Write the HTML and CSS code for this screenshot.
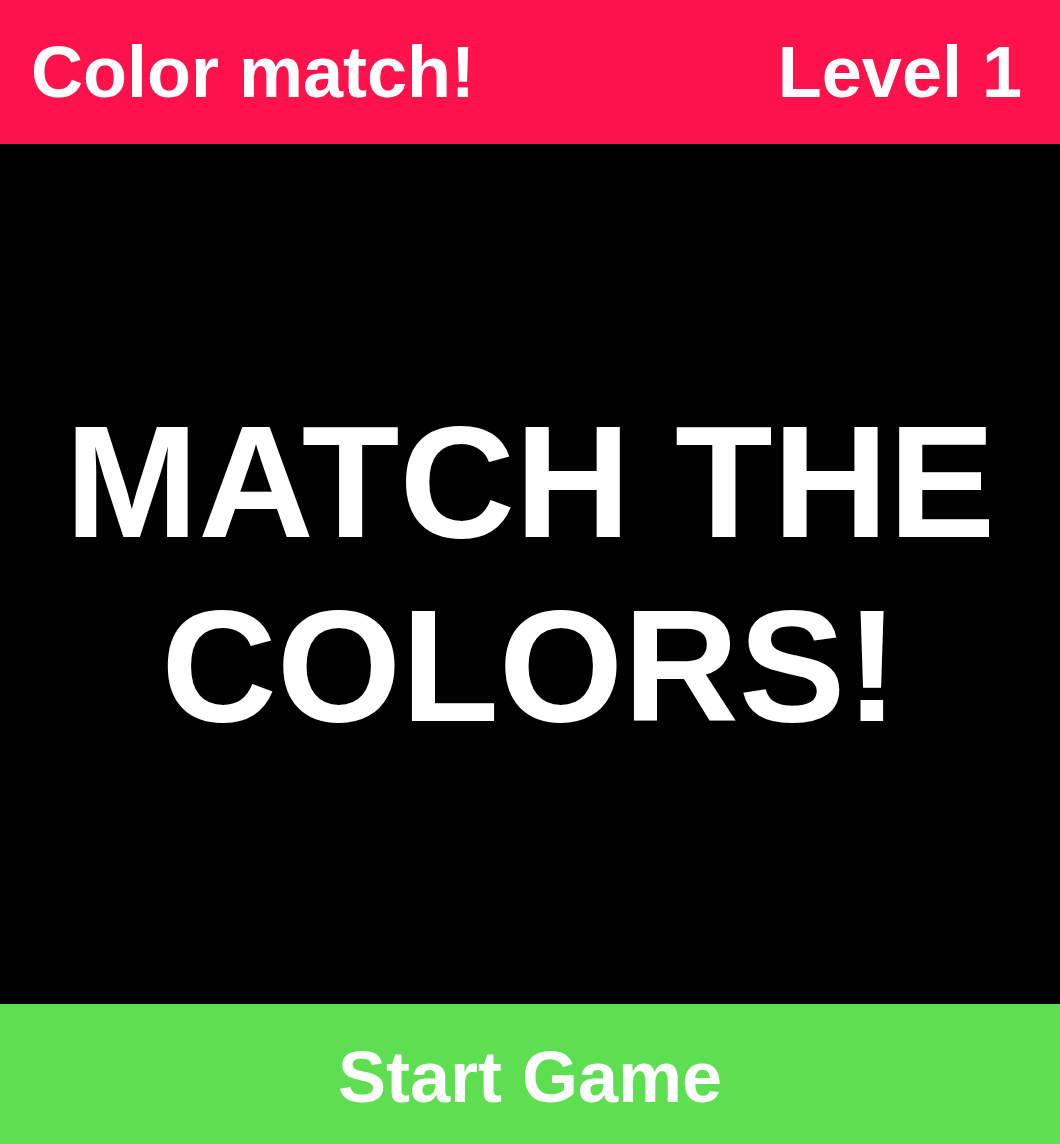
FILE: index.html
```html
<!DOCTYPE html>
<html>
<head>
<meta charset="utf-8">
<link rel="stylesheet" href="styles.css">
</head>
<body>
<div class="app">
  <header class="topbar">
    <span class="title">Color match!</span>
    <span class="level">Level 1</span>
  </header>
  <main class="stage">
    <h1 class="prompt">MATCH THE<br>COLORS!</h1>
  </main>
  <footer class="start">Start Game</footer>
</div>
</body>
</html>
```

FILE: styles.css
```css
html, body {
  margin: 0;
  padding: 0;
  background: #000;
}
.app {
  display: flex;
  flex-direction: column;
  height: 1144px;
  font-family: "Liberation Sans", Arial, Helvetica, sans-serif;
  font-weight: bold;
  color: #fff;
}
.topbar {
  height: 144px;
  flex: none;
  box-sizing: border-box;
  background: #fd134b;
  display: flex;
  align-items: center;
  justify-content: space-between;
  padding: 0 38px 0 31px;
  font-size: 72px;
  line-height: 1;
}
.stage {
  flex: 1;
  background: #000;
  display: flex;
  align-items: center;
  justify-content: center;
}
.prompt {
  margin: 0;
  font-size: 160px;
  line-height: 184px;
  text-align: center;
  font-weight: bold;
}
.start {
  height: 140px;
  flex: none;
  box-sizing: border-box;
  padding-top: 6px;
  background: #5ddf51;
  display: flex;
  align-items: center;
  justify-content: center;
  font-size: 72px;
  line-height: 1;
}
```
